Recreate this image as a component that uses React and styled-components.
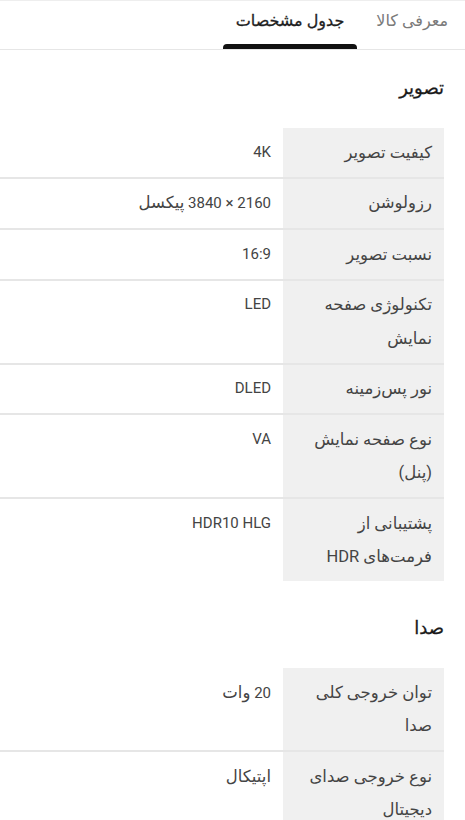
import React from 'react';
import styled, { createGlobalStyle } from 'styled-components';

const GlobalStyle = createGlobalStyle`
  body {
    margin: 0;
    background: #ffffff;
    font-family: Roboto, "DejaVu Sans", sans-serif;
  }
`;

const Page = styled.div`
  direction: rtl;
  width: 465px;
  min-height: 820px;
  background: #ffffff;
  overflow: hidden;
`;

const TabBar = styled.div`
  display: flex;
  align-items: stretch;
  gap: 6px;
  height: 48px;
  padding-right: 4px;
  border-top: 1px solid #eeeeee;
  border-bottom: 1px solid #e6e6e6;
`;

const Tab = styled.div`
  position: relative;
  display: flex;
  align-items: center;
  padding: 0 13px 10px;
  font-size: 16px;
  font-weight: 500;
  color: ${(p) => (p.active ? '#1f1f1f' : '#7a7a7a')};
  -webkit-text-stroke: ${(p) => (p.active ? '0.3px #1f1f1f' : '0')};

  &::after {
    content: '';
    display: ${(p) => (p.active ? 'block' : 'none')};
    position: absolute;
    left: 0;
    right: 0;
    bottom: 0;
    height: 5px;
    background: #111111;
    border-radius: 4px 4px 0 0;
  }
`;

const Section = styled.section`
  padding-top: 26px;

  & + & {
    padding-top: 35px;
  }
`;

const Heading = styled.h2`
  margin: 0 21px 28px 0;
  font-size: 18px;
  line-height: 24px;
  font-weight: 500;
  color: #1a1a1a;
  -webkit-text-stroke: 0.3px #1a1a1a;
`;

const Table = styled.div`
  padding-right: 21px;
`;

const Row = styled.div`
  display: grid;
  grid-template-columns: 161px 1fr;
  border-bottom: 2px solid #e6e6e6;

  &:last-child {
    border-bottom: none;
  }
`;

const Label = styled.div`
  background: #f0f0f0;
  padding: 7.5px 12px;
  font-size: 16.5px;
  line-height: 33.5px;
  color: #444444;
`;

const Value = styled.div`
  padding: 7.5px 12px;
  font-size: 15px;
  line-height: 33.5px;
  color: #444444;
`;

const Fa = styled.span`
  font-size: 16.5px;
`;

const sections = [
  {
    title: 'تصویر',
    rows: [
      ['کیفیت تصویر', '4K'],
      ['رزولوشن', <>2160 × 3840 <Fa>پیکسل</Fa></>],
      ['نسبت تصویر', '16:9'],
      ['تکنولوژی صفحه نمایش', 'LED'],
      ['نور پس‌زمینه', 'DLED'],
      ['نوع صفحه نمایش (پنل)', 'VA'],
      ['پشتیبانی از فرمت‌های HDR', 'HDR10 HLG'],
    ],
  },
  {
    title: 'صدا',
    rows: [
      ['توان خروجی کلی صدا', <>20 <Fa>وات</Fa></>],
      ['نوع خروجی صدای دیجیتال', <Fa>اپتیکال</Fa>],
    ],
  },
];

export default function App() {
  return (
    <Page>
      <GlobalStyle />
      <TabBar>
        <Tab>معرفی کالا</Tab>
        <Tab active>جدول مشخصات</Tab>
      </TabBar>
      {sections.map((s) => (
        <Section key={s.title}>
          <Heading>{s.title}</Heading>
          <Table>
            {s.rows.map(([label, value]) => (
              <Row key={label}>
                <Label>{label}</Label>
                <Value>{value}</Value>
              </Row>
            ))}
          </Table>
        </Section>
      ))}
    </Page>
  );
}
